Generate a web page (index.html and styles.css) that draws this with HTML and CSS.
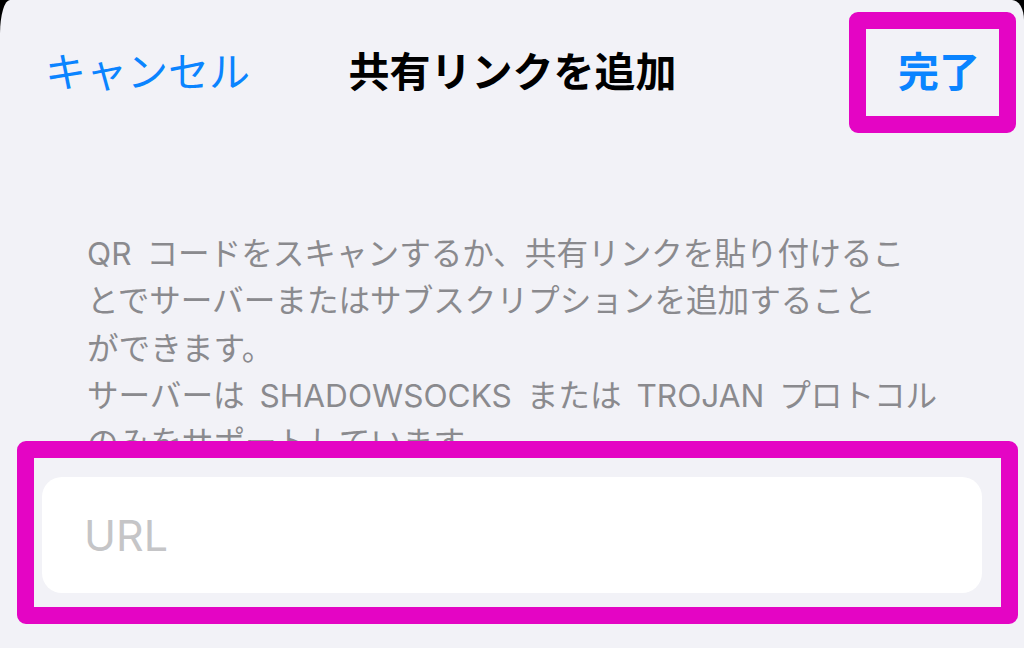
FILE: index.html
```html
<!DOCTYPE html>
<html lang="ja">

<head>
  <meta charset="UTF-8">
  <title>共有リンクを追加</title>
  <link rel="stylesheet" href="styles.css">
</head>

<body>

  <div class="sheet">
    <header class="nav">
      <button class="nav-btn cancel">キャンセル</button>
      <h1 class="nav-title">共有リンクを追加</h1>
      <button class="nav-btn done">完了<span class="mark mark-done"></span></button>
    </header>

    <p class="hint">QR コードをスキャンするか、共有リンクを貼り付けるこ<br>とでサーバーまたはサブスクリプションを追加すること<br>ができます。<br>サーバーは SHADOWSOCKS または TROJAN プロトコル<br>のみをサポートしています。</p>

    <div class="field-wrap">
      <input class="field" type="text" placeholder="URL">
      <span class="mark mark-field"></span>
    </div>
  </div>

</body>

</html>
```

FILE: styles.css
```css
html,
body {
  margin: 0;
  background: #000;
}

.sheet {
  height: 648px;
  background: #f2f2f7;
  border-top-left-radius: 10px 34px;
  border-top-right-radius: 12px 20px;
  font-family: "Inter", "Noto Sans CJK JP", sans-serif;
  overflow: hidden;
}

.nav {
  display: grid;
  grid-template-columns: 1fr auto 1fr;
  align-items: center;
  height: 138px;
  padding: 0 44px 0 45px;
}

.nav-btn {
  border: none;
  background: none;
  padding: 0;
  font-family: "Noto Sans CJK JP", sans-serif;
  font-size: 41px;
  line-height: 41px;
  color: #0a84ff;
}

.cancel {
  justify-self: start;
}

.done {
  justify-self: end;
  position: relative;
  font-weight: 700;
}

.nav-title {
  margin: 0;
  font-family: "Noto Sans CJK JP", sans-serif;
  font-size: 41px;
  line-height: 41px;
  font-weight: 700;
  color: #000;
}

.hint {
  margin: 92px 0 18px;
  padding-left: 87px;
  height: 229px;
  overflow: hidden;
  font-size: 31.6px;
  line-height: 47.3px;
  word-spacing: 6px;
  color: #8a8a8e;
}

.field-wrap {
  position: relative;
  margin: 0 42px;
}

.field {
  display: block;
  box-sizing: border-box;
  width: 100%;
  height: 116px;
  border: none;
  border-radius: 20px;
  padding: 0 42px;
  background: #fff;
  font-family: "Inter", sans-serif;
  font-size: 43px;
  color: #000;
  outline: none;
}

.field::placeholder {
  color: #c5c5c7;
}

/* highlight boxes drawn over the screenshot */
.mark {
  position: absolute;
  border: 17px solid #e405c4;
  border-radius: 9px;
  pointer-events: none;
}

.mark-done {
  top: -37px;
  bottom: -43px;
  left: -49px;
  right: -36px;
}

.mark-field {
  top: -36px;
  bottom: -31px;
  left: -25px;
  right: -36px;
}
```
